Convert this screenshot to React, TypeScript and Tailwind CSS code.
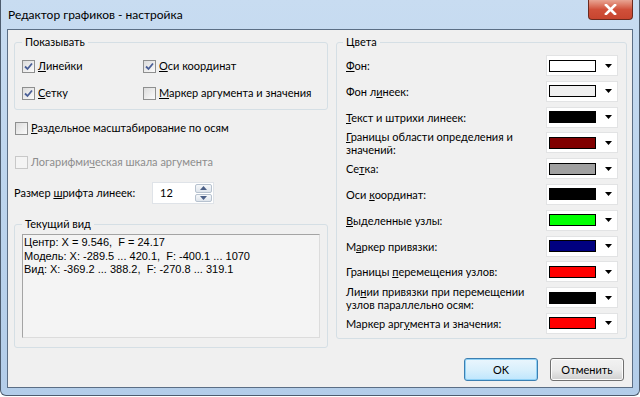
import type { ReactNode } from 'react';

const ui = "font-['Lato',sans-serif] text-[11px] leading-[16px] text-black";

interface ColorRow {
  label: ReactNode;
  color: string;
}

const colorRows: ColorRow[] = [
  { label: <><u>Ф</u>он:</>, color: '#ffffff' },
  { label: <>Фон л<u>и</u>неек:</>, color: '#f0f0f0' },
  { label: <><u>Т</u>екст и штрихи линеек:</>, color: '#000000' },
  { label: <><u>Г</u>раницы области определения и<br />значений:</>, color: '#800000' },
  { label: <>Се<u>т</u>ка:</>, color: '#a0a0a0' },
  { label: <>Оси <u>к</u>оординат:</>, color: '#000000' },
  { label: <><u>В</u>ыделенные узлы:</>, color: '#00ff00' },
  { label: <>М<u>а</u>ркер привязки:</>, color: '#000080' },
  { label: <>Границы <u>п</u>еремещения узлов:</>, color: '#ff0000' },
  { label: <>Ли<u>н</u>ии привязки при перемещении<br />узлов параллельно осям:</>, color: '#000000' },
  { label: <>Маркер арг<u>у</u>мента и значения:</>, color: '#ff0000' },
];

function CheckBox({ checked, disabled, children }: { checked?: boolean; disabled?: boolean; children: ReactNode }) {
  return (
    <div className={`h-[16px] flex items-center gap-[3px] whitespace-nowrap ${disabled ? 'text-[#8d8d8d]' : ''}`}>
      <div
        className={`w-[13px] h-[13px] shrink-0 border flex items-center justify-center ${
          disabled ? 'border-[#c8c8c8] bg-[#f4f4f4]' : 'border-[#8e8f8f] bg-gradient-to-br from-[#dcdcdc] to-[#fbfbfb]'
        }`}
      >
        {checked && (
          <svg width="9" height="9" viewBox="0 0 9 9">
            <path d="M1 4.5 L3.5 7 L8 1.5" fill="none" stroke="#4a5f97" strokeWidth="1.8" />
          </svg>
        )}
      </div>
      <span>{children}</span>
    </div>
  );
}

function ColorCombo({ color }: { color: string }) {
  return (
    <div className="w-[72px] h-[21px] shrink-0 bg-white border border-[#e2e3e4] flex items-center pl-[2px] pr-[5px] justify-between">
      <div className="w-[47px] h-[12px] border border-black" style={{ backgroundColor: color }} />
      <svg width="7" height="4" viewBox="0 0 7 4">
        <path d="M0 0 H7 L3.5 4 Z" fill="#000" />
      </svg>
    </div>
  );
}

export default function App() {
  return (
    <div className={`w-[640px] h-[397px] overflow-hidden bg-white ${ui}`}>
      <div className="w-[640px] h-[396px] flex flex-col bg-gradient-to-b from-[#c8dcf1] via-[#bcd4ed] to-[#b3cde9] border-x border-b border-[#4d5c6e] rounded-b-[6px]">
        {/* Title bar */}
        <div className="h-[29px] flex items-start justify-between shrink-0">
          <div className="pl-[7px] pt-[7px] text-[12px] text-black">Редактор графиков - настройка</div>
          <div className="mr-[6px] w-[45px] h-[20px] rounded-b-[4px] border border-t-0 border-[#6b2a1f] bg-gradient-to-b from-[#e8a493] via-[#d0503a] to-[#c7452f] flex items-center justify-center">
            <svg width="13" height="11" viewBox="0 0 13 11">
              <path d="M2 1 L11 10 M11 1 L2 10" stroke="#ffffff" strokeWidth="2.6" strokeLinecap="square" />
            </svg>
          </div>
        </div>

        {/* Client area */}
        <div className="mx-[6px] h-[359px] shrink-0 overflow-hidden border border-[#5b6e85] bg-[#f0f0f0] flex flex-col">
          <div className="flex items-start gap-[8px] pl-[6px] pt-[4px]">
            {/* Left column */}
            <div className="w-[314px] flex flex-col">
              <fieldset className="border border-[#d5dfe5] rounded-[3px] pl-[7px] pb-[8px]">
                <legend className="px-[3px]">Показывать</legend>
                <div className="grid grid-cols-[121px_1fr] gap-y-[11px] mt-[8px]">
                  <CheckBox checked><u>Л</u>инейки</CheckBox>
                  <CheckBox checked><u>О</u>си координат</CheckBox>
                  <CheckBox checked><u>С</u>етку</CheckBox>
                  <CheckBox><u>М</u>аркер аргумента и значения</CheckBox>
                </div>
              </fieldset>

              <div className="pl-[1px] mt-[10px] flex flex-col gap-[18px]">
                <CheckBox><u>Р</u>аздельное масштабирование по осям</CheckBox>
                <CheckBox disabled>Логарифми<u>ч</u>еская шкала аргумента</CheckBox>
              </div>

              <div className="flex items-center mt-[12px]">
                <span className="w-[138px] whitespace-nowrap">Размер <u>ш</u>рифта линеек:</span>
                <div className="w-[62px] h-[22px] bg-white border border-[#dfe3e8] flex items-center justify-between pl-[7px] pr-[1px]">
                  <span>12</span>
                  <div className="w-[17px] h-[18px] flex flex-col gap-[1px]">
                    <div className="flex-1 border border-[#b7c2cf] rounded-[2px] bg-gradient-to-b from-[#f6f8fa] to-[#dfe5ec] flex items-center justify-center">
                      <svg width="7" height="4" viewBox="0 0 7 4"><path d="M0 4 H7 L3.5 0 Z" fill="#4b5f86" /></svg>
                    </div>
                    <div className="flex-1 border border-[#b7c2cf] rounded-[2px] bg-gradient-to-b from-[#f6f8fa] to-[#dfe5ec] flex items-center justify-center">
                      <svg width="7" height="4" viewBox="0 0 7 4"><path d="M0 0 H7 L3.5 4 Z" fill="#4b5f86" /></svg>
                    </div>
                  </div>
                </div>
              </div>

              <fieldset className="mt-[12px] border border-[#d5dfe5] rounded-[3px] px-[7px] pb-[9px]">
                <legend className="px-[3px]">Текущий вид</legend>
                <div className="mt-[2px] h-[104px] bg-[#f4f4f4] border border-[#a4a4a4] border-r-[#dcdcdc] border-b-[#dcdcdc] px-[1px] pt-[1px] whitespace-pre font-['Liberation_Sans',sans-serif] text-[11px] leading-[13.5px]">
                  <div>Центр: X = 9.546,  F = 24.17</div>
                  <div>Модель: X: -289.5 ... 420.1,  F: -400.1 ... 1070</div>
                  <div>Вид: X: -369.2 ... 388.2,  F: -270.8 ... 319.1</div>
                </div>
              </fieldset>
            </div>

            {/* Right column */}
            <fieldset className="w-[291px] border border-[#d5dfe5] rounded-[3px] pl-[9px] pr-[8px] pb-[4px]">
              <legend className="-ml-[3px] px-[3px]">Цвета</legend>
              <div className="flex flex-col gap-[4.8px] mt-[5px]">
                {colorRows.map((row, i) => (
                  <div key={i} className="h-[21px] flex items-center justify-between">
                    <span className="whitespace-nowrap leading-[13px]">{row.label}</span>
                    <ColorCombo color={row.color} />
                  </div>
                ))}
              </div>
            </fieldset>
          </div>

          {/* Buttons */}
          <div className="mt-auto mb-[6px] flex justify-end gap-[12px] pr-[8px]">
            <button className="w-[74px] h-[23px] rounded-[3px] border border-[#3c7fb1] bg-gradient-to-b from-[#eaf6fd] via-[#d9f0fc] to-[#bee6fd] shadow-[inset_0_0_0_1px_#8fd1f6]">
              OK
            </button>
            <button className="w-[74px] h-[23px] rounded-[3px] border border-[#707070] bg-gradient-to-b from-[#f2f2f2] via-[#ebebeb] to-[#cfcfcf] shadow-[inset_0_0_0_1px_#fcfcfc]">
              Отменить
            </button>
          </div>
        </div>
      </div>
    </div>
  );
}
